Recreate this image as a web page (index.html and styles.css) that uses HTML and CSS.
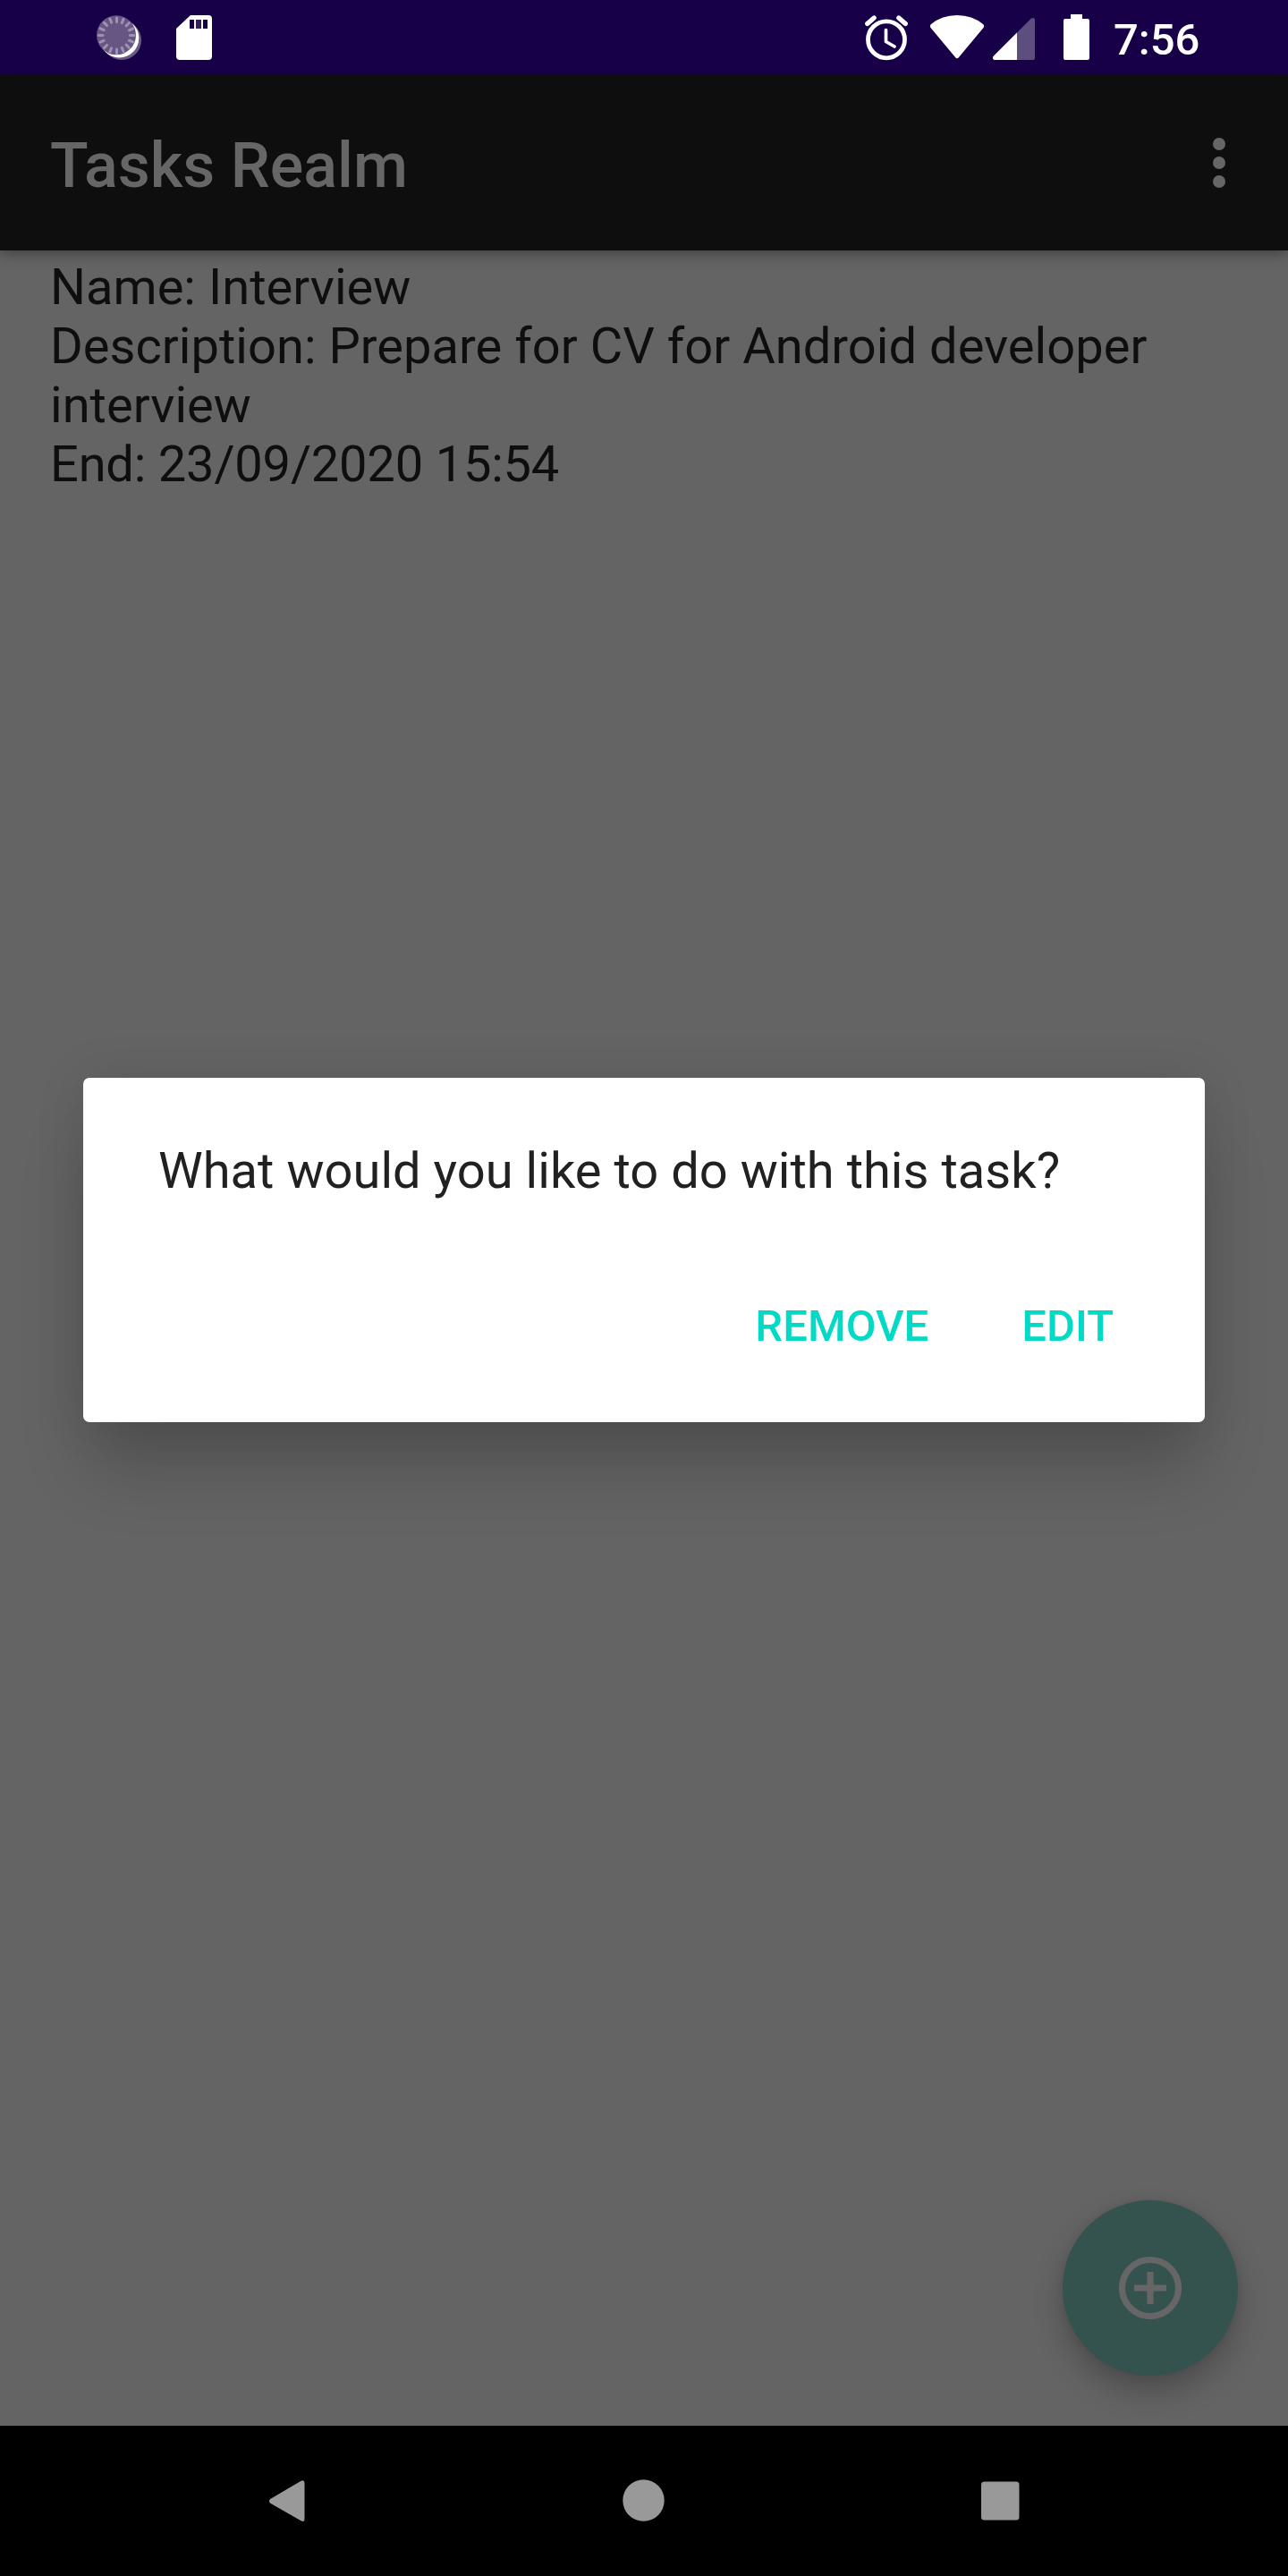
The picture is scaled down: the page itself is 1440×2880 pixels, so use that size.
FILE: index.html
```html
<!DOCTYPE html>
<html lang="en">
<head>
<meta charset="utf-8">
<title>Tasks Realm</title>
<link rel="stylesheet" href="styles.css">
</head>
<body>
<div class="screen">
  <header class="status-bar">
    <div class="status-group">
      <svg width="50" height="84" viewBox="108 0 50 84">
        <circle cx="136" cy="45" r="22" fill="#6a5a88"/>
        <circle cx="133.3" cy="42.5" r="22" fill="#fff"/>
        <circle cx="130" cy="39.3" r="22" fill="#675683"/>
        <g stroke="#9e92b1" stroke-width="3" stroke-linecap="round">
          <g id="ticks"><path d="M130.500 20v4.500M130.500 55v4.500"/>
          <path d="M130.500 20v4.500M130.500 55v4.500" transform="rotate(22.500 130.500 39.500)"/>
          <path d="M130.500 20v4.500M130.500 55v4.500" transform="rotate(45 130.500 39.500)"/>
          <path d="M130.500 20v4.500M130.500 55v4.500" transform="rotate(67.500 130.500 39.500)"/></g>
          <use href="#ticks" transform="rotate(90 130.500 39.500)"/>
        </g>
      </svg>
      <svg width="40" height="84" viewBox="197 0 40 84">
        <path d="M213 17h20a4 4 0 0 1 4 4v42a4 4 0 0 1-4 4h-32a4 4 0 0 1-4-4V32z" fill="#fff"/>
        <path d="M212 22h5v10h-5zM227 22h5v10h-5z" fill="#180048"/>
        <path d="M219 22h6v10h-6z" fill="#341f5d"/>
      </svg>
    </div>
    <div class="status-group status-right">
      <svg class="alarm" width="50" height="84" viewBox="966 0 50 84" fill="none" stroke="#fff" stroke-linecap="round">
        <circle cx="991" cy="44.300" r="20.500" stroke-width="4.800"/>
        <path d="M990.500 33.500v13l9.500 5.500" stroke-width="3.700" stroke-linejoin="round"/>
        <path d="M969.700 26.500l7.500-6.500M1004.800 20l7.500 6.500" stroke-width="5.200"/>
      </svg>
      <svg class="wifi" width="60" height="84" viewBox="1040 0 60 84">
        <path d="M1041 27Q1053 17 1070 17T1099 27Q1101 29 1099.500 31L1072 64Q1070 66.500 1068 64L1040.500 31Q1039 29 1041 27z" fill="#fff"/>
      </svg>
      <svg class="signal" width="48" height="84" viewBox="1110 0 48 84">
        <path d="M1111 62.500L1152.500 21Q1157 18.500 1157 23V65q0 2-2 2h-43q-3-1-1-4.500z" fill="#5d4e7f"/>
        <path d="M1137 36.500V67h-25.500q-2.500-1.500-1-4z" fill="#fff"/>
      </svg>
      <svg class="battery" width="30" height="84" viewBox="1189 0 30 84">
        <path d="M1197 16h13v5h6q2 0 2 2v42q0 2-2 2h-25q-2 0-2-2V23q0-2 2-2h6z" fill="#fff"/>
      </svg>
      <span class="clock">7:56</span>
    </div>
  </header>
  <div class="app-bar">
    <h1 class="app-title">Tasks Realm</h1>
    <svg width="14" height="56" viewBox="0 0 14 56" fill="#666">
      <circle cx="7" cy="7" r="7"/><circle cx="7" cy="28" r="7"/><circle cx="7" cy="49" r="7"/>
    </svg>
  </div>
  <main class="content">
    <div class="task">
      <p>Name: Interview</p>
      <p>Description: Prepare for CV for Android developer<br>interview</p>
      <p class="task-end">End: 23/09/2020 15:54</p>
    </div>
    <div class="fab">
      <svg width="84" height="84" viewBox="0 0 84 84" fill="none" stroke="#666" stroke-width="7.200">
        <circle cx="42" cy="42" r="31.500"/><path d="M42 24v36M24 42h36"/>
      </svg>
    </div>
  </main>
  <nav class="nav-bar">
    <svg width="48" height="48" viewBox="297 2772 48 48">
      <path d="M302 2794L336.500 2773.800Q340.500 2772 340.500 2776V2816Q340.500 2820.500 336.500 2818.300L302 2798.500Q300 2796.300 302 2794z" fill="#999"/>
    </svg>
    <svg width="48" height="48" viewBox="0 0 48 48"><circle cx="23.500" cy="23.500" r="23.200" fill="#999"/></svg>
    <svg width="48" height="48" viewBox="0 0 48 48"><rect x="2" y="2.500" width="42.500" height="43" rx="3.500" fill="#999"/></svg>
  </nav>
  <div class="overlay">
    <section class="dialog">
      <p class="message">What would you like to do with this task?</p>
      <div class="actions"><span class="action">REMOVE</span><span class="action">EDIT</span></div>
    </section>
  </div>
</div>
</body>
</html>
```
FILE: styles.css
```css
body {
  margin: 0;
  background: #646464;
  font-family: Roboto, "Liberation Sans", sans-serif;
}
p, h1 { margin: 0; }
svg { display: block; flex: none; }
.screen {
  position: relative;
  width: 1440px;
  height: 2880px;
  display: flex;
  flex-direction: column;
  overflow: hidden;
}
.status-bar {
  height: 84px;
  box-sizing: border-box;
  padding: 0 99px 0 108px;
  display: flex;
  justify-content: space-between;
  background: #180048;
}
.status-group { display: flex; gap: 39px; }
.status-right { gap: 0; }
.wifi { margin-left: 24px; }
.signal { margin-left: 10px; }
.battery { margin-left: 31px; }
.clock {
  width: 96px;
  margin-left: 26px;
  font-size: 49px;
  font-weight: 500;
  line-height: 89px;
  color: #fff;
  white-space: nowrap;
}
.app-bar {
  position: relative;
  height: 196px;
  box-sizing: border-box;
  padding: 0 70px 0 56px;
  display: flex;
  align-items: center;
  justify-content: space-between;
  background: #0e0e0e;
  box-shadow: 0 4px 14px rgba(0, 0, 0, .35);
}
.app-title {
  font-size: 70px;
  font-weight: 500;
  line-height: 82px;
  padding-top: 6px;
  color: #666;
}
.content {
  flex: 1;
  display: flex;
  flex-direction: column;
  justify-content: space-between;
  padding: 8px 56px 56px;
}
.task {
  font-size: 56px;
  line-height: 66px;
  letter-spacing: .04px;
  color: #0e0e0e;
  white-space: nowrap;
}
.task-end { letter-spacing: -.19px; }
.fab {
  align-self: flex-end;
  width: 196px;
  height: 196px;
  border-radius: 50%;
  display: flex;
  align-items: center;
  justify-content: center;
  background: #34524e;
  box-shadow: 0 18px 34px rgba(0, 0, 0, .24), 0 0 10px rgba(0, 0, 0, .08);
}
.nav-bar {
  height: 168px;
  box-sizing: border-box;
  padding: 0 297px;
  display: flex;
  align-items: center;
  justify-content: space-between;
  background: #000;
}
.overlay {
  position: absolute;
  inset: 84px 0 169px;
  display: flex;
  align-items: center;
  justify-content: center;
}
.dialog {
  width: 1254px;
  height: 385px;
  box-sizing: border-box;
  padding: 71px 84px 0;
  border-radius: 7px;
  background: #fff;
  box-shadow: 0 60px 72px -8px rgba(0, 0, 0, .19), 0 0 56px rgba(0, 0, 0, .1);
}
.message {
  font-size: 56px;
  line-height: 66px;
  letter-spacing: .04px;
  color: #212121;
  white-space: nowrap;
}
.actions {
  display: flex;
  justify-content: flex-end;
  gap: 104px;
  margin-top: 112px;
  padding-right: 18px;
}
.action {
  font-size: 49px;
  font-weight: 500;
  line-height: 57px;
  color: #03dac5;
}
```
